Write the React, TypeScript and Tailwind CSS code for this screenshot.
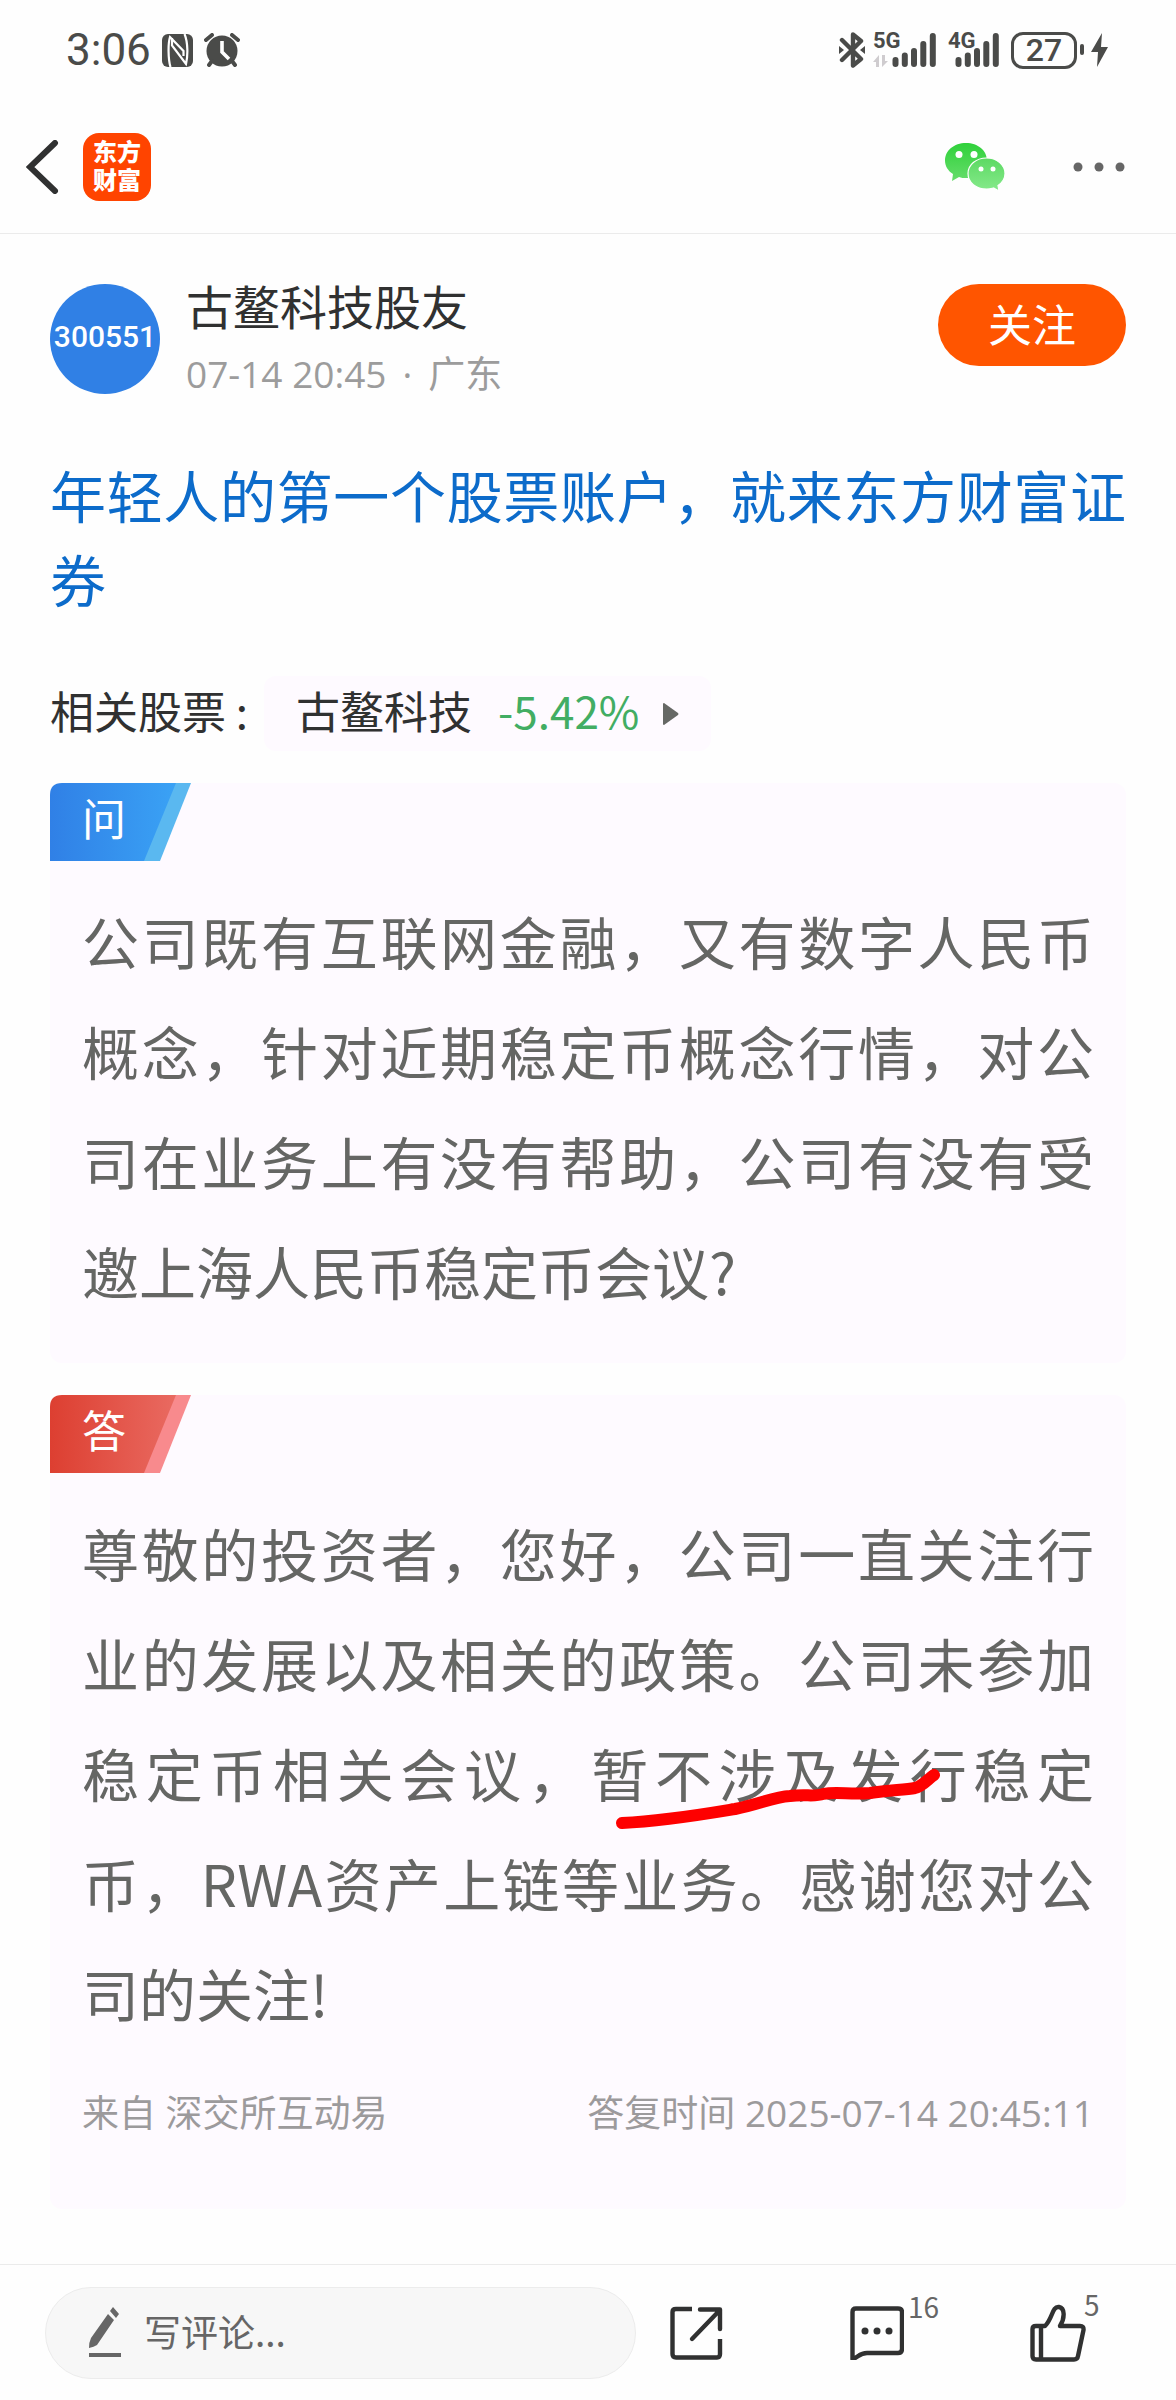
import React from 'react';

const question = '公司既有互联网金融，又有数字人民币概念，针对近期稳定币概念行情，对公司在业务上有没有帮助，公司有没有受邀上海人民币稳定币会议?';

const NfcIcon = () => (
    <svg viewBox="0 0 31 33" className="w-[31px] h-[33px]">
        <rect width="31" height="33" rx="6" fill="#4a4b49" />
        <path d="M8.500 33 C6 25 6 9 8 3 L21.500 17 V22" stroke="#fff" strokeWidth="2.200" fill="none" />
        <path d="M10 4 V11.500 L24 30 C26 22 26 8 22.500 0" stroke="#fff" strokeWidth="2.200" fill="none" />
    </svg>
);

const AlarmIcon = () => (
    <svg viewBox="0 0 36 34" className="w-9 h-[34px]">
        <circle cx="18" cy="18" r="15.5" fill="#4a4b49" />
        <path d="M2 7 L8 2 M34 7 L28 2 M8 28 L5 32 M28 28 L31 32" stroke="#4a4b49" strokeWidth="4" strokeLinecap="round" />
        <path d="M18 8 V19 L25 26" stroke="#fff" strokeWidth="3.600" fill="none" />
    </svg>
);

const BluetoothIcon = () => (
    <svg viewBox="0 0 26 36" className="w-[26px] h-9">
        <path d="M3 8 L22 27 L14 33.5 V2.5 L22 9 L3 28" stroke="#4a4b49" strokeWidth="4.4" fill="none" strokeLinejoin="round" strokeLinecap="round" />
        <path d="M0 14 L5 18 L0 22 Z M26 14 L21 18 L26 22 Z" fill="#4a4b49" />
    </svg>
);

const Signal = ({ label, transfer = false }: { label: string, transfer?: boolean }) => (
    <div className={`relative h-[34px] ${transfer ? 'w-[63px]' : 'w-[51px]'}`}>
        <span className="absolute left-0 -top-1 text-[22px] leading-6 font-bold font-['Roboto',sans-serif]">{label}</span>
        {transfer && (
            <svg viewBox="0 0 15 12" className="absolute left-0 bottom-0 w-[15px] h-3">
                <path d="M6 12 V0 L0 7 H3 V12 Z M9 0 V12 L15 6 H12 V0 Z" fill="#cfcccf" />
            </svg>
        )}
        <svg viewBox="0 0 44 34" className="absolute right-0 top-0 w-11 h-[34px]">
            <path d="M3.500 27 V31 M12.800 22.500 V31 M22 18 V31 M31.300 11 V31 M40.800 3 V31" stroke="#4a4b49" strokeWidth="6" strokeLinecap="round" />
        </svg>
    </div>
);

const StatusBar = () => (
    <div className="flex items-center justify-between h-[100px] pl-[66px] pr-[67px] text-[#4a4b49]">
        <div className="flex items-center gap-[11px]">
            <span className="text-[44px] leading-none font-['Roboto',sans-serif]">3:06</span>
            <NfcIcon />
            <AlarmIcon />
        </div>
        <div className="flex items-center">
            <BluetoothIcon />
            <div className="flex items-center gap-3 ml-2">
                <Signal label="5G" transfer />
                <Signal label="4G" />
                <div className="flex items-center">
                    <div className="flex items-center justify-center w-[66px] h-[37px] rounded-xl border-[3px] border-[#4a4b49] text-[32px] leading-none font-medium font-['Roboto',sans-serif]">
                        27
                    </div>
                    <svg viewBox="0 0 32 36" className="w-8 h-9">
                        <rect x="3" y="12" width="4" height="11" rx="2" fill="#4a4b49" />
                        <path d="M25 1 L14 20 H21 L20 35 L31 15 H24 Z" fill="#4a4b49" />
                    </svg>
                </div>
            </div>
        </div>
    </div>
);

const WechatIcon = () => (
    <svg viewBox="0 0 62 50" className="w-[62px] h-[50px]">
        <defs>
            <linearGradient id="wechat-back" x1="0" y1="0" x2="0" y2="1">
                <stop offset="0" stopColor="#2fd13a" />
                <stop offset="1" stopColor="#66dd6b" />
            </linearGradient>
            <linearGradient id="wechat-front" x1="0" y1="0" x2="0" y2="1">
                <stop offset="0" stopColor="#5cd963" />
                <stop offset="1" stopColor="#86ea8b" />
            </linearGradient>
        </defs>
        <path d="M22 1 C10 1 1 8.500 1 18.500 C1 24 4 29 9 32 L8 39 L15 35 C17 36 20 36 22 36 C34 36 43 28.500 43 18.500 C43 8.500 34 1 22 1 Z" fill="url(#wechat-back)" />
        <path d="M42.500 16 C32 16 24 23 24 31.500 C24 40.500 32 47 42.500 47 C45 47 47.500 46.500 49.500 46 L55 49 L54 43.500 C58.500 40.500 61 36.500 61 31.500 C61 23 53 16 42.500 16 Z" fill="url(#wechat-front)" stroke="#fff" strokeWidth="1.200" />
        <g fill="#fff">
            <circle cx="15" cy="12.500" r="3.500" />
            <circle cx="30" cy="12.500" r="3.500" />
            <circle cx="37" cy="27" r="2.500" />
            <circle cx="49" cy="27" r="2.500" />
        </g>
    </svg>
);

const Header = () => (
    <header className="flex items-center justify-between h-[134px] pl-[26px] pr-[51px] border-b border-[#ebebeb]">
        <div className="flex items-center gap-6">
            <button type="button" aria-label="返回">
                <svg viewBox="0 0 33 54" className="w-[33px] h-[54px]">
                    <path d="M29 3 L4 27 L29 51" stroke="#303131" strokeWidth="6" fill="none" strokeLinecap="round" />
                </svg>
            </button>
            <a href="#" className="flex flex-col items-center justify-center w-[68px] h-[68px] pb-1 rounded-2xl bg-[#ff4400] text-white text-[24px] leading-7 font-black">
                <span>东方</span>
                <span>财富</span>
            </a>
        </div>
        <div className="flex items-center gap-[67px]">
            <button type="button" aria-label="微信分享">
                <WechatIcon />
            </button>
            <button type="button" aria-label="更多">
                <svg viewBox="0 0 52 10" className="w-[52px] h-[10px]" fill="#666">
                    <circle cx="5" cy="5" r="4.500" />
                    <circle cx="26" cy="5" r="4.500" />
                    <circle cx="47" cy="5" r="4.500" />
                </svg>
            </button>
        </div>
    </header>
);

const Tag = ({ text, tone }: { text: string, tone: 'blue' | 'red' }) => {
    const colors = tone === 'blue'
        ? { from: '#3080e6', to: '#3aa2f5', edge: '#5ab8f0' }
        : { from: '#dd3f31', to: '#e96a61', edge: '#f88a8d' };

    return (
        <h2 className="relative w-[141px] h-[78px] pl-8 text-white text-[44px] leading-[68px]">
            <svg viewBox="0 0 141 78" className="absolute inset-0 w-full h-full">
                <defs>
                    <linearGradient id={`tag-${tone}`}>
                        <stop offset="0" stopColor={colors.from} />
                        <stop offset="1" stopColor={colors.to} />
                    </linearGradient>
                </defs>
                <path d="M110 0 H141 L110 78 H80 Z" fill={colors.edge} />
                <path d="M12 0 H126 L94 78 H0 V12 Q0 0 12 0 Z" fill={`url(#tag-${tone})`} />
            </svg>
            <span className="relative">{text}</span>
        </h2>
    );
};

// hand-drawn marker stroke, hangs off the text that follows it
const MarkerStroke = () => (
    <span className="relative">
        <svg viewBox="0 0 330 60" className="absolute left-6 -bottom-4 w-[330px] h-[60px]" fill="none">
            <path
                d="M7 54 C50 52 90 45 120 40 C145 35 158 28 175 27 C190 25 200 28 208 25 C222 22 235 26 255 24 C275 21 290 21 300 19 C308 17 313 10 319 6"
                stroke="#fe0000"
                strokeWidth="12"
                strokeLinecap="round"
            />
        </svg>
    </span>
);

const Article = () => (
    <main className="flex-1 px-[50px] pt-[50px] pb-[52px]">
        <div className="flex items-start">
            <div className="flex items-center justify-center w-[110px] h-[110px] shrink-0 rounded-full bg-[#3080e5] text-white text-[30px] leading-none font-medium font-['Roboto',sans-serif] pb-1">
                300551
            </div>
            <div className="flex-1 ml-[26px] -mt-3">
                <div className="text-[47px] leading-[66px] text-[#303131]">古鳌科技股友</div>
                <div className="flex gap-4 text-[37px] leading-[72px] text-[#9c9c9c] font-['Open_Sans','Noto_Sans_CJK_SC',sans-serif]">
                    <span>07-14 20:45</span>
                    <span>·</span>
                    <span>广东</span>
                </div>
            </div>
            <button type="button" className="w-[188px] h-[82px] rounded-full bg-[#ff5500] text-white text-[44px] leading-none pb-1">
                关注
            </button>
        </div>

        <h1 className="mt-[42px] text-[56px] leading-[84px] text-justify text-[#0c6bca]">
            <a href="#">年轻人的第一个股票账户，就来东方财富证券</a>
        </h1>

        <div className="flex items-center mt-14 text-[44px] leading-[66px] text-[#303131]">
            <span className="pb-2">相关股票 :</span>
            <a href="#" className="flex items-center h-[75px] ml-4 pl-8 pr-8 pb-2 rounded-xl bg-[#fefaff]">
                <span>古鳌科技</span>
                <span className="ml-[26px] text-[#42ad63]">-5.42%</span>
                <svg viewBox="0 0 16 22" className="w-4 h-[22px] ml-6 mt-2">
                    <path d="M1 0 L15 10 Q16 11 15 12 L1 22 Q0 22 0 21 V1 Q0 0 1 0 Z" fill="#666865" />
                </svg>
            </a>
        </div>

        <section className="mt-8 pb-[38px] rounded-xl bg-[#fefaff]">
            <Tag text="问" tone="blue" />
            <p className="mt-6 px-8 text-[57px] leading-[110px] text-justify text-[#656664]">{question}</p>
        </section>

        <section className="mt-8 pb-[68px] rounded-xl bg-[#fefaff]">
            <Tag text="答" tone="red" />
            <p className="mt-6 px-8 text-[57px] leading-[110px] text-justify text-[#656664]">
                尊敬的投资者，您好，公司一直关注行业的发展以及相关的政策。公司未参加稳定币相关会议，<MarkerStroke />暂不涉及发行稳定币，RWA资产上链等业务。感谢您对公司的关注!
            </p>
            <div className="flex items-center justify-between mt-[38px] px-8 text-[37px] leading-[56px] text-[#9c9a9c] font-['Open_Sans','Noto_Sans_CJK_SC',sans-serif]">
                <span>来自 深交所互动易</span>
                <span>答复时间 2025-07-14 20:45:11</span>
            </div>
        </section>
    </main>
);

const BottomBar = () => (
    <footer className="flex items-center h-[136px] pl-[45px] pr-[90px] border-t border-[#ebebeb]">
        <label className="flex items-center flex-1 min-w-0 h-[92px] pl-[42px] pr-8 rounded-full border border-[#ececec] bg-[#f7f7f7]">
            <svg viewBox="0 0 34 56" className="w-[34px] h-14 shrink-0" fill="#666">
                <path d="M20 9 L26 15 L9 40 Q6 42 1 43 Q1 37 3 33 Z M22 6 L25 2 L31 9 L28 13 Z" />
                <rect x="1" y="48" width="32" height="4" />
            </svg>
            <input
                type="text"
                aria-label="写评论"
                placeholder="写评论..."
                className="flex-1 min-w-0 ml-[22px] pb-1 bg-transparent outline-none text-[37px] leading-[56px] placeholder:text-[#666]"
            />
        </label>
        <div className="flex items-center gap-[126px] ml-[34px]">
            <button type="button" aria-label="分享">
                <svg viewBox="0 0 54 54" className="w-[54px] h-[54px]" fill="none" stroke="#303131" strokeWidth="4.400">
                    <path d="M22 3 H6 Q2.500 3 2.500 6 V48 Q2.500 51.500 6 51.500 H47 Q50 51.500 50 48 V33" />
                    <path d="M30 3.500 H50 V23 M49 5 L22 33" strokeLinecap="round" strokeLinejoin="round" />
                </svg>
            </button>
            <button type="button" aria-label="评论" className="relative">
                <svg viewBox="0 0 54 54" className="w-[54px] h-[54px]" fill="none" stroke="#303131" strokeWidth="4.400">
                    <path d="M6 2.500 H48 Q52 2.500 52 6 V43 Q52 47 48 47 H17 C9 47 8 52 2.500 53 V6 Q2.500 2.500 6 2.500 Z" strokeLinejoin="round" />
                    <g fill="#303131" stroke="none">
                        <circle cx="15" cy="25" r="3.500" />
                        <circle cx="27" cy="25" r="3.500" />
                        <circle cx="39" cy="25" r="3.500" />
                    </g>
                </svg>
                <span className="absolute left-[58px] -top-4 text-[28px] leading-8 text-[#666]">16</span>
            </button>
            <button type="button" aria-label="点赞" className="relative">
                <svg viewBox="0 0 56 58" className="w-14 h-[58px]" fill="none" stroke="#303131" strokeWidth="4.400" strokeLinejoin="round">
                    <path d="M15 22 H6 Q2.500 22 2.500 25 V52 Q2.500 55.500 6 55.500 H44 Q47.500 55.500 48 52 L53.500 26 Q54 22 50 22 H30 C35 14 35 4 29 3 C22 2 23 14 15 22 Z" />
                    <path d="M11 22 V55" />
                </svg>
                <span className="absolute left-[54px] -top-4 text-[28px] leading-8 text-[#666]">5</span>
            </button>
        </div>
    </footer>
);

export default function App() {
    return (
        <div lang="zh-CN" className="flex flex-col min-h-screen bg-[#fefefe] font-['Noto_Sans_CJK_SC',sans-serif]">
            <StatusBar />
            <Header />
            <Article />
            <BottomBar />
        </div>
    );
}
